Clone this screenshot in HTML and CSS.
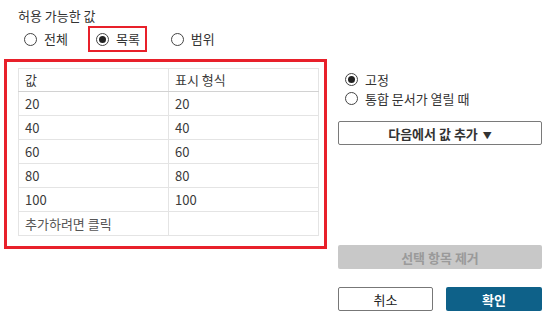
FILE: index.html
```html
<!DOCTYPE html>
<html>

<head>
    <title>허용 가능한 값</title>
    <link rel="stylesheet" href="styles.css">
</head>

<body>
    <div class="dialog">
        <div class="title">허용 가능한 값</div>

        <div class="scope">
            <label class="radio"><span class="dot"></span>전체</label>
            <label class="radio mark"><span class="dot on"></span>목록</label>
            <label class="radio"><span class="dot"></span>범위</label>
        </div>

        <div class="main">
            <div class="list-box">
                <table class="values">
                    <tr class="head">
                        <td>값</td>
                        <td>표시 형식</td>
                    </tr>
                    <tr><td>20</td><td>20</td></tr>
                    <tr><td>40</td><td>40</td></tr>
                    <tr><td>60</td><td>60</td></tr>
                    <tr><td>80</td><td>80</td></tr>
                    <tr><td>100</td><td>100</td></tr>
                    <tr class="add"><td>추가하려면 클릭</td><td></td></tr>
                </table>
            </div>

            <div class="side">
                <label class="radio row"><span class="dot on"></span>고정</label>
                <label class="radio row"><span class="dot"></span>통합 문서가 열릴 때</label>

                <button class="btn add-from" type="button">다음에서 값 추가 <span class="caret">▼</span></button>
                <button class="btn remove" type="button" disabled>선택 항목 제거</button>

                <div class="actions">
                    <button class="btn cancel" type="button">취소</button>
                    <button class="btn ok" type="button">확인</button>
                </div>
            </div>
        </div>
    </div>
</body>

</html>
```

FILE: styles.css
```css
body {
    margin: 0;
    background: #ffffff;
    font-family: "Noto Sans CJK KR", "Noto Sans", sans-serif;
    font-size: 13px;
    color: #333333;
}

.dialog {
    padding-top: 8px;
}

.title {
    margin-left: 18px;
    line-height: 16px;
}

/* radio buttons */
.radio {
    display: flex;
    align-items: center;
    gap: 7px;
    line-height: 18px;
    cursor: pointer;
}

.dot {
    width: 11px;
    height: 11px;
    border: 1px solid #444;
    border-radius: 50%;
    display: flex;
    align-items: center;
    justify-content: center;
    background: #fff;
}

.dot.on::after {
    content: "";
    width: 7px;
    height: 7px;
    border-radius: 50%;
    background: #222;
}

.scope {
    display: flex;
    align-items: center;
    margin-top: 2px;
    padding-left: 24px;
}

.scope .radio.mark {
    margin-left: 20px;
    margin-right: 24px;
    padding: 2px 5px 2px 6px;
    border: 2px solid #e8202a;
}

.main {
    display: flex;
    align-items: flex-start;
    margin-top: 7px;
}

.list-box {
    margin-left: 4px;
    width: 306px;
    height: 178px;
    border: 3px solid #e8202a;
    padding: 6px 0 0 11px;
    box-sizing: content-box;
}

.values {
    border-collapse: collapse;
    width: 301px;
    table-layout: fixed;
}

.values td {
    border: 1px solid #e4e4e4;
    height: 23px;
    padding: 0 6px;
    line-height: 16px;
    color: #3a3a3a;
}

.values .head td {
    height: 22px;
    border-bottom: 1px solid #d2d2d2;
}

.values .add td {
    color: #555;
}

.side {
    width: 204px;
    margin-left: 11px;
    padding-top: 11px;
    display: flex;
    flex-direction: column;
}

.side .row {
    line-height: 19px;
    padding-left: 7px;
}

.btn {
    font-family: inherit;
    font-size: 13px;
    height: 24px;
    border-radius: 2px;
    cursor: pointer;
}

.add-from {
    margin-top: 13px;
    background: #fff;
    border: 1px solid #7a7a7a;
    font-weight: bold;
    color: #333;
}

.caret {
    font-size: 9px;
    margin-left: 2px;
}

.remove {
    margin-top: 100px;
    background: #c8c8c8;
    border: none;
    color: #9a9a9a;
    font-weight: bold;
}

.actions {
    display: flex;
    gap: 13px;
    margin-top: 18px;
}

.cancel {
    width: 95px;
    background: #fff;
    border: 1px solid #777;
    color: #222;
}

.ok {
    flex: 1;
    background: #0e6189;
    border: none;
    color: #fff;
    font-weight: bold;
}
```
